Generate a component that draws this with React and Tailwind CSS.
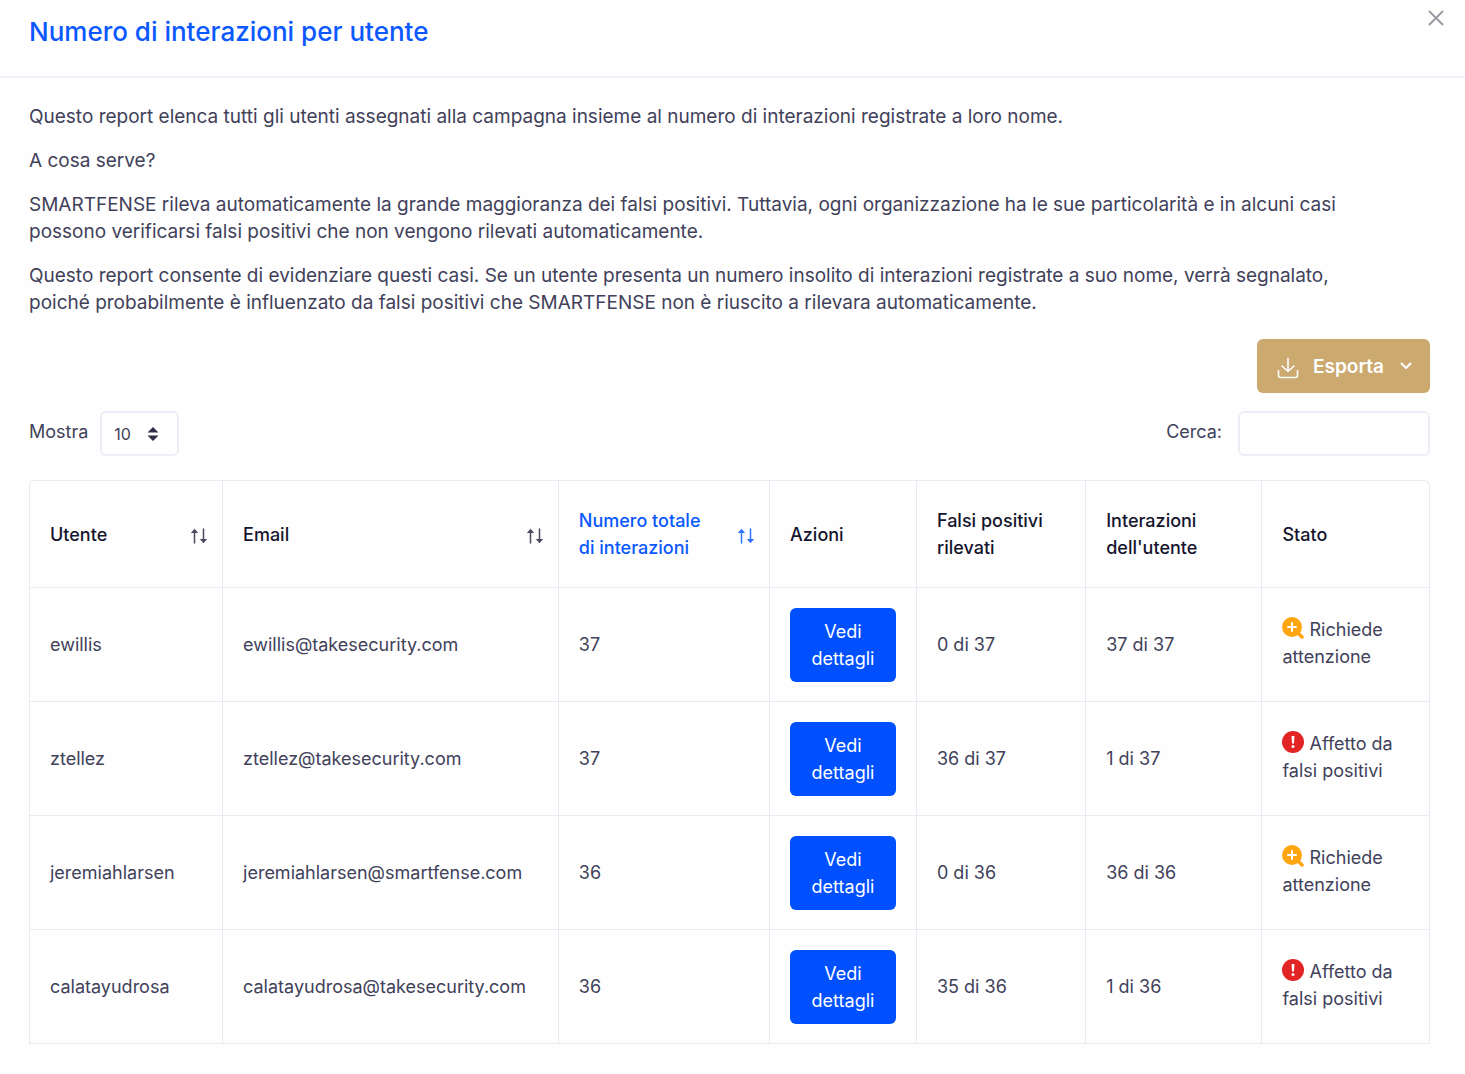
import { useState } from 'react'

const users = [
  { name: 'ewillis', email: 'ewillis@takesecurity.com', total: 37, falsePositives: 0, status: 'attention' },
  { name: 'ztellez', email: 'ztellez@takesecurity.com', total: 37, falsePositives: 36, status: 'affected' },
  { name: 'jeremiahlarsen', email: 'jeremiahlarsen@smartfense.com', total: 36, falsePositives: 0, status: 'attention' },
  { name: 'calatayudrosa', email: 'calatayudrosa@takesecurity.com', total: 36, falsePositives: 35, status: 'affected' },
]

function CloseIcon() {
  return (
    <svg width="16" height="16" viewBox="0 0 16 16" fill="none" stroke="currentColor" strokeWidth="2" strokeLinecap="round" aria-hidden="true">
      <path d="M1.5 1.5 14.5 14.5M14.5 1.5 1.5 14.5" />
    </svg>
  )
}

function DownloadIcon() {
  return (
    <svg className="mt-1" width="22" height="22" viewBox="0 0 22 22" fill="none" stroke="currentColor" strokeWidth="1.6" strokeLinecap="round" strokeLinejoin="round" aria-hidden="true">
      <path d="M11 1.5v13M5 9l6 5.5L17 9" />
      <path d="M1.5 13.5v5a2 2 0 0 0 2 2h15a2 2 0 0 0 2-2v-5" />
    </svg>
  )
}

function ChevronIcon() {
  return (
    <svg width="12" height="8" viewBox="0 0 12 8" fill="none" stroke="currentColor" strokeWidth="2" strokeLinecap="round" strokeLinejoin="round" aria-hidden="true">
      <path d="M1.5 1.5 6 6l4.5-4.5" />
    </svg>
  )
}

function SortIcon() {
  return (
    <svg width="18" height="16" viewBox="0 0 18 16" fill="none" stroke="currentColor" strokeWidth="1.5" strokeLinecap="round" aria-hidden="true">
      <path d="M4.5 15V3M13.5 1v12" />
      <path d="M.8 5 4.5.8 8.2 5Z M9.8 11l3.7 4.2 3.7-4.2Z" fill="currentColor" stroke="none" />
    </svg>
  )
}

function AttentionIcon() {
  return (
    <svg className="inline-block align-[-3px]" width="22" height="22" viewBox="0 0 22 22" aria-hidden="true">
      <circle cx="10" cy="10" r="10" fill="#fea50f" />
      <path d="M16 16l4 4" stroke="#fea50f" strokeWidth="3.5" strokeLinecap="round" />
      <path d="M10 6v8M6 10h8" stroke="white" strokeWidth="2" strokeLinecap="round" />
    </svg>
  )
}

function AffectedIcon() {
  return (
    <svg className="inline-block align-[-3px]" width="22" height="22" viewBox="0 0 22 22" aria-hidden="true">
      <circle cx="11" cy="11" r="11" fill="#e32424" />
      <path d="M9.6 5h2.8l-.4 7.5h-2Z" fill="white" />
      <circle cx="11" cy="15.6" r="1.5" fill="white" />
    </svg>
  )
}

function HeaderCell({ children, sortable, active }) {
  return (
    <th
      scope="col"
      className={`h-[107px] border-b border-r border-[#e9e9f4] pr-[14px] pl-5 text-left font-medium last:border-r-0 ${
        active ? 'text-[#0a58ff]' : 'text-[#15152e]'
      }`}
    >
      {sortable ? (
        <button type="button" className="flex w-full items-center justify-between text-left">
          <span>{children}</span>
          <span className={`shrink-0 pt-1 ${active ? 'text-[#2f74ff]' : 'text-[#4a4a60]'}`}>
            <SortIcon />
          </span>
        </button>
      ) : (
        children
      )}
    </th>
  )
}

function Cell({ children }) {
  return <td className="border-b border-r border-[#e9e9f4] px-5 last:border-r-0 last:pb-1">{children}</td>
}

function App() {
  const [search, setSearch] = useState('')
  const [pageSize, setPageSize] = useState('10')
  const rows = users.filter(u => (u.name + u.email).includes(search.toLowerCase()))

  return (
    <div className="min-h-screen bg-[#fefefe] pb-7 font-[Inter,sans-serif] text-[18px] leading-[27px] text-[#41415a]">
      {/* Header */}
      <header className="flex items-start justify-between border-b-2 border-[#f0f0f8] pr-[21px] pb-7 pl-[29px]">
        <h1 className="pt-4 text-[26px] leading-8 font-medium text-[#0a58ff]">Numero di interazioni per utente</h1>
        <button type="button" aria-label="Chiudi" className="pt-[10px] text-[#9b9ba6]">
          <CloseIcon />
        </button>
      </header>

      <main className="pt-[25px] pr-[35px] pl-[29px]">
        {/* Description */}
        <div className="space-y-[17px] pr-[70px] text-[19px]">
          <p>Questo report elenca tutti gli utenti assegnati alla campagna insieme al numero di interazioni registrate a loro nome.</p>
          <p>A cosa serve?</p>
          <p>
            SMARTFENSE rileva automaticamente la grande maggioranza dei falsi positivi. Tuttavia, ogni organizzazione ha le sue
            particolarità e in alcuni casi possono verificarsi falsi positivi che non vengono rilevati automaticamente.
          </p>
          <p>
            Questo report consente di evidenziare questi casi. Se un utente presenta un numero insolito di interazioni registrate
            a suo nome, verrà segnalato, poiché probabilmente è influenzato da falsi positivi che SMARTFENSE non è riuscito a
            rilevara automaticamente.
          </p>
        </div>

        {/* Toolbar */}
        <div className="mt-[23px] flex justify-end">
          <button type="button" className="flex h-[54px] items-center rounded-md bg-[#cba96f] pr-[18px] pl-5 text-[19px] font-semibold text-white">
            <DownloadIcon />
            <span className="mr-4 ml-[14px]">Esporta</span>
            <ChevronIcon />
          </button>
        </div>
        <div className="mt-[18px] mb-6 flex items-center justify-between">
          <div className="flex items-center gap-3">
            <label htmlFor="page-size" className="pb-1">Mostra</label>
            <div className="relative">
              <select
                id="page-size"
                value={pageSize}
                onChange={e => setPageSize(e.target.value)}
                className="block h-[45px] w-[79px] appearance-none rounded-md border-2 border-[#ededf6] bg-white pl-3 text-base"
              >
                <option>10</option>
                <option>25</option>
                <option>50</option>
              </select>
              <svg className="pointer-events-none absolute top-[15px] right-5 text-[#2e2e48]" width="12" height="16" viewBox="0 0 12 16" fill="currentColor" aria-hidden="true">
                <path d="M.5 6.5 6 1l5.5 5.5ZM.5 9.5 6 15l5.5-5.5Z" />
              </svg>
            </div>
          </div>
          <div className="flex items-center gap-4">
            <label htmlFor="search" className="pb-1">Cerca:</label>
            <input
              id="search"
              type="text"
              value={search}
              onChange={e => setSearch(e.target.value)}
              className="h-[45px] w-48 rounded-md border-2 border-[#ededf6] bg-white px-3"
            />
          </div>
        </div>

        {/* Users table */}
        <div className="overflow-hidden rounded-t-md border border-b-0 border-[#e9e9f4]">
          <table className="w-full table-fixed border-separate border-spacing-0">
            <colgroup>
              <col className="w-[13.8%]" />
              <col className="w-[24%]" />
              <col className="w-[15.1%]" />
              <col className="w-[10.5%]" />
              <col className="w-[12.1%]" />
              <col className="w-[12.6%]" />
              <col className="w-[11.9%]" />
            </colgroup>
            <thead>
              <tr>
                <HeaderCell sortable>Utente</HeaderCell>
                <HeaderCell sortable>Email</HeaderCell>
                <HeaderCell sortable active>Numero totale<br />di interazioni</HeaderCell>
                <HeaderCell>Azioni</HeaderCell>
                <HeaderCell>Falsi positivi rilevati</HeaderCell>
                <HeaderCell>Interazioni dell'utente</HeaderCell>
                <HeaderCell>Stato</HeaderCell>
              </tr>
            </thead>
            <tbody>
              {rows.map(user => (
                <tr key={user.name} className="h-[114px]">
                  <Cell>{user.name}</Cell>
                  <Cell>{user.email}</Cell>
                  <Cell>{user.total}</Cell>
                  <Cell>
                    <button type="button" className="w-full rounded-md bg-[#0050ff] px-4 py-[10px] text-white">
                      Vedi dettagli
                    </button>
                  </Cell>
                  <Cell>{user.falsePositives} di {user.total}</Cell>
                  <Cell>{user.total - user.falsePositives} di {user.total}</Cell>
                  <Cell>
                    {user.status === 'attention' ? (
                      <><AttentionIcon /> Richiede attenzione</>
                    ) : (
                      <><AffectedIcon /> Affetto da falsi positivi</>
                    )}
                  </Cell>
                </tr>
              ))}
            </tbody>
          </table>
        </div>
      </main>
    </div>
  )
}

export default App
